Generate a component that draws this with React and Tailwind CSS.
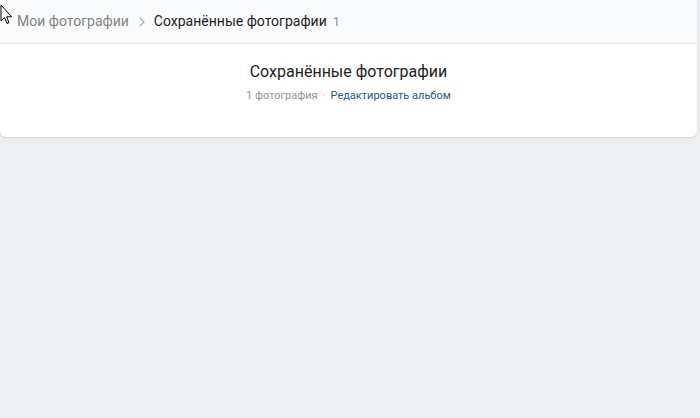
export default function App() {
  return (
    <div
      className="relative w-[700px] h-[418px] overflow-hidden bg-[#edeef0] text-[#000]"
      style={{ fontFamily: "Roboto, 'Liberation Sans', sans-serif" }}
    >
      <div className="w-[697px] bg-white rounded-br-[6px] rounded-bl-[6px] shadow-[0_1px_0_0_#d7d8db,0_0_0_1px_#e3e4e8]">
        {/* Breadcrumbs */}
        <div className="h-[44px] bg-[#fafbfc] border-b border-[#e7e8ec] flex items-center pl-[17px] text-[14px]">
          <span className="text-[#828282]">Мои фотографии</span>
          <svg className="ml-[10px] mr-[9px] mt-[1px]" width="6" height="10" viewBox="0 0 6 10" fill="none">
            <path d="M1 1 L5 5 L1 9" stroke="#a0a4aa" strokeWidth="1.1" />
          </svg>
          <span className="text-[#222]">Сохранённые фотографии</span>
          <span className="ml-[6px] text-[#939393] text-[13px]">1</span>
        </div>

        {/* Album header */}
        <div className="flex flex-col items-center pt-[18px] pb-[34px]">
          <div className="text-[16px] leading-[20px] text-[#222]">Сохранённые фотографии</div>
          <div className="mt-[7px] text-[11px] leading-[14px] flex items-center">
            <span className="text-[#939393]">1 фотография</span>
            <span className="mx-[5px] text-[#939393]">·</span>
            <span className="text-[#2a5885]">Редактировать альбом</span>
          </div>
        </div>
      </div>

      {/* Mouse cursor */}
      <svg className="absolute left-0 top-[4px]" width="13" height="21" viewBox="0 0 13 21">
        <path
          d="M1 1 L1 17 L4.5 13.5 L7 19.5 L9 18.7 L6.6 12.8 L11.5 12.8 Z"
          fill="#fff"
          stroke="#000"
          strokeWidth="1"
          strokeLinejoin="round"
        />
      </svg>
    </div>
  );
}
